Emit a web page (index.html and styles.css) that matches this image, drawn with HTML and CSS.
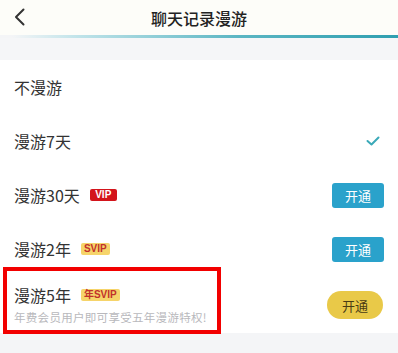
FILE: index.html
```html
<!DOCTYPE html>
<html lang="zh-CN">
<head>
    <meta charset="UTF-8">
    <meta name="viewport" content="width=device-width, initial-scale=1.0">
    <title>聊天记录漫游</title>
    <link rel="stylesheet" href="styles.css">
</head>
<body>
    <div class="page">
        <header class="topbar">
            <span class="back">
                <svg width="11" height="18" viewBox="0 0 11 18">
                    <path d="M9.5 1.5 L2 9 L9.5 16.5" fill="none" stroke="#333" stroke-width="2" stroke-linecap="round" stroke-linejoin="round"/>
                </svg>
            </span>
            <h1 class="title">聊天记录漫游</h1>
            <span></span>
        </header>
        <div class="topbar-line"></div>
        <div class="band"></div>

        <ul class="list">
            <li class="row">
                <span class="name">不漫游</span>
            </li>
            <li class="row">
                <span class="name">漫游7天</span>
                <svg class="check" width="14" height="10" viewBox="0 0 14 10">
                    <path d="M1.5 5 L5.5 8.5 L12.5 1.5" fill="none" stroke="#3aa9b8" stroke-width="2" stroke-linecap="round" stroke-linejoin="round"/>
                </svg>
            </li>
            <li class="row">
                <span class="name">漫游30天<span class="badge vip">VIP</span></span>
                <button class="open">开通</button>
            </li>
            <li class="row">
                <span class="name">漫游2年<span class="badge svip">SVIP</span></span>
                <button class="open">开通</button>
            </li>
            <li class="row row-tall">
                <div class="info">
                    <span class="name">漫游5年<span class="badge svip">年SVIP</span></span>
                    <span class="desc">年费会员用户即可享受五年漫游特权!</span>
                </div>
                <button class="open open-gold">开通</button>
                <div class="mark"></div>
            </li>
        </ul>
    </div>
</body>
</html>
```

FILE: styles.css
```css
* {
    margin: 0;
    padding: 0;
    box-sizing: border-box;
}

body {
    background: #f4f5f7;
    font-family: "Noto Sans CJK SC", "Noto Sans", sans-serif;
    color: #333;
}

.page {
    width: 398px;
    min-height: 353px;
}

.topbar {
    height: 35px;
    display: grid;
    grid-template-columns: 40px 1fr 40px;
    align-items: center;
    background: #fdfdf9;
}

.back {
    display: flex;
    padding-left: 14px;
    padding-bottom: 1px;
}

.title {
    text-align: center;
    font-size: 16px;
    font-weight: 500;
    color: #222;
}

.topbar-line {
    height: 3px;
    background: linear-gradient(to right, rgba(180, 225, 232, 0) 3%, #bfe3e9 20%, #5bb6c3 60%, #2f9fb0 100%);
}

.band {
    height: 22px;
    background: #f5f6f8;
}

.list {
    list-style: none;
    background: #fff;
}

.row {
    height: 54px;
    display: flex;
    align-items: center;
    justify-content: space-between;
    padding: 0 14px;
    position: relative;
}

.row-tall {
    height: 57px;
    padding-bottom: 2px;
}

.name {
    display: flex;
    align-items: center;
    font-size: 16px;
    color: #333;
}

.badge {
    display: inline-block;
    margin-left: 10px;
    height: 12px;
    line-height: 12px;
    padding: 0 3px;
    border-radius: 2px;
    font-family: "Liberation Sans", "Noto Sans CJK SC", sans-serif;
    font-size: 10px;
    font-weight: 700;
    text-align: center;
}

.vip {
    background: #d3141b;
    color: #fff;
    width: 27px;
}

.svip {
    background: #f6d46a;
    color: #c2312a;
}

.info {
    display: flex;
    flex-direction: column;
    gap: 2px;
}

.desc {
    font-size: 11.5px;
    color: #b8b8bc;
    letter-spacing: 0.3px;
}

.check {
    margin-right: 4px;
}

.open {
    width: 52px;
    height: 25px;
    border: none;
    border-radius: 3px;
    background: #2aa2cb;
    color: #fff;
    font-family: inherit;
    font-size: 13px;
}

.open-gold {
    width: 56px;
    height: 28px;
    margin-right: 1px;
    margin-top: 3px;
    border-radius: 14px;
    background: #e9c948;
    color: #4a3c14;
}

.mark {
    position: absolute;
    left: 3px;
    top: -9px;
    width: 218px;
    height: 67px;
    border: 4.5px solid #f20000;
    pointer-events: none;
}
```
